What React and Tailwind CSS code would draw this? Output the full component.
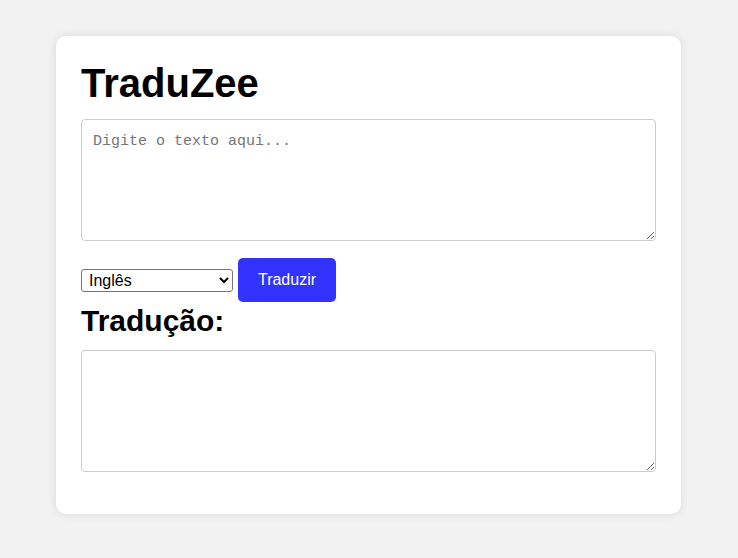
export default function App() {
  return (
    <div className="min-h-[558px] bg-[#f2f2f2] pt-9 font-['Liberation_Sans',Arial,sans-serif] text-black">
      <div className="ml-[56px] w-[625px] rounded-[10px] bg-white px-[25px] pt-[25px] pb-[25px] shadow-[0_0_10px_rgba(0,0,0,0.1)]">
        <h1 className="mb-[13px] text-[40px] font-bold leading-[45px]">TraduZee</h1>

        <textarea
          placeholder="Digite o texto aqui..."
          className="block h-[122px] w-full rounded-[4px] border border-[#cccccc] px-[11px] pt-[13px] pb-[11px] font-['Liberation_Mono',monospace] text-[15px] leading-[18px] placeholder:text-[#757575] focus:outline-none"
        />

        <div className="mt-[17px] flex items-center gap-[5px]">
          <select className="h-[23px] w-[152px] rounded-[3px] border border-[#767676] bg-white pl-[3px] text-[16px] leading-[20px]">
            <option>Inglês</option>
            <option>Espanhol</option>
            <option>Francês</option>
          </select>
          <button className="h-[44px] w-[98px] rounded-[5px] bg-[#3333ff] text-[16px] text-white">
            Traduzir
          </button>
        </div>

        <h2 className="mt-[2px] mb-[13px] text-[30px] font-bold leading-[33px]">Tradução:</h2>

        <textarea
          readOnly
          className="block h-[122px] w-full rounded-[4px] border border-[#cccccc] p-[11px] font-['Liberation_Mono',monospace] text-[15px] focus:outline-none"
        />
        <div className="h-[17px]" />
      </div>
    </div>
  );
}
